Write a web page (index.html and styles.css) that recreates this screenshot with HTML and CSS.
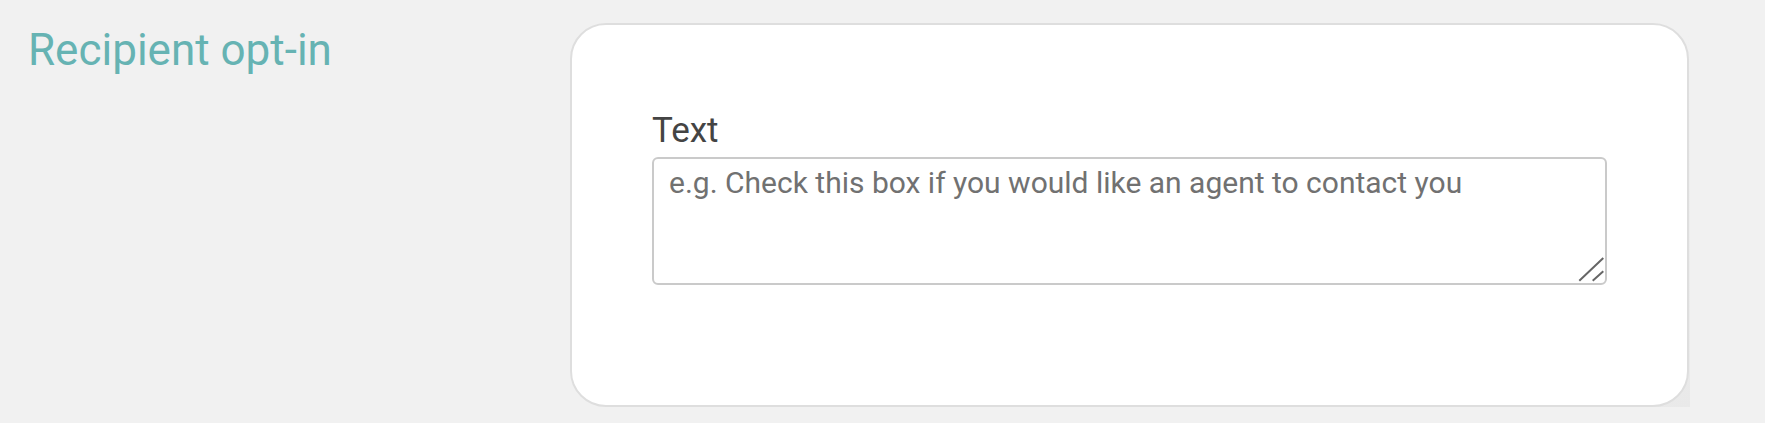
FILE: index.html
```html
<!DOCTYPE html>
<html lang="en">
<head>
<meta charset="utf-8">
<title>Recipient opt-in</title>
<link rel="stylesheet" href="styles.css">
</head>
<body>
  <section class="row">
    <div class="side">
      <h2 class="title">Recipient opt-in</h2>
    </div>
    <div class="card-wrap">
      <div class="card">
        <label class="label" for="optin">Text</label>
        <div class="field">
          <textarea id="optin" class="input" placeholder="e.g. Check this box if you would like an agent to contact you"></textarea>
          <svg class="grip" width="30" height="30" viewBox="0 0 30 30" aria-hidden="true">
            <path d="M2.3 25.7 L26.3 3 M15.7 25.7 L26.3 16.3" stroke="#666" stroke-width="2" fill="none"/>
          </svg>
        </div>
      </div>
    </div>
  </section>
</body>
</html>
```

FILE: styles.css
```css
html, body {
  margin: 0;
  padding: 0;
  background: #f1f1f1;
  font-family: Roboto, "Liberation Sans", Arial, sans-serif;
}

.row {
  display: flex;
  align-items: flex-start;
  padding-top: 23px;
}

.side {
  width: 570px;
  flex: none;
  padding-left: 28px;
  box-sizing: border-box;
}

.title {
  margin: 0;
  font-size: 44px;
  line-height: 54px;
  font-weight: 400;
  color: #66b3b3;
}

.card-wrap {
  width: 1120px;
  flex: none;
  background: linear-gradient(135deg, rgba(235,235,235,0) 75%, #e9e9e9 100%);
}

.card {
  box-sizing: border-box;
  width: 1119px;
  height: 384px;
  background: #fff;
  border: 2px solid #dedede;
  border-radius: 36px;
  padding: 85px 80px 0 80px;
  display: flex;
  flex-direction: column;
}

.label {
  font-size: 35px;
  line-height: 41px;
  color: #444;
  margin-bottom: 6px;
}

.field {
  position: relative;
  height: 128px;
}

.input {
  display: block;
  box-sizing: border-box;
  width: 100%;
  height: 128px;
  margin: 0;
  border: 2px solid #cacaca;
  border-radius: 6px;
  padding: 6px 15px;
  font-family: Roboto, "Liberation Sans", Arial, sans-serif;
  font-size: 30px;
  line-height: 35px;
  color: #444;
  background: #fff;
  resize: none;
  outline: none;
}

.input::placeholder {
  color: #717171;
  opacity: 1;
}

.grip {
  position: absolute;
  right: 0;
  bottom: 0;
}
```
